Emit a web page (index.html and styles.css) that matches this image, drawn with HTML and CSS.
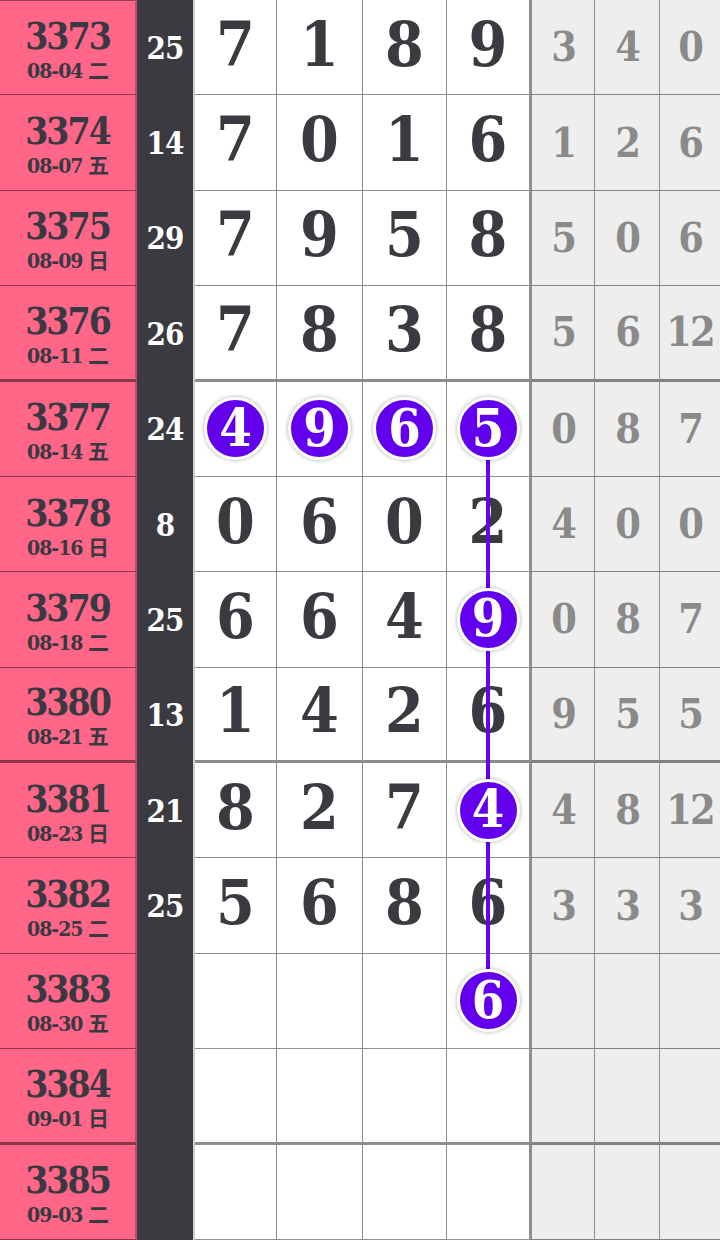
FILE: index.html
```html
<!DOCTYPE html>
<html lang="zh">
<head>
    <meta charset="UTF-8">
    <meta name="viewport" content="width=device-width, initial-scale=1.0">
    <title>走势图</title>
    <link rel="stylesheet" href="styles.css">
</head>
<body>
    <div class="chart" id="chart"></div>

    <script>
        // issue, date, sum, 4 digits, 3 spans; balls = digit positions drawn as circles
        let rows = [
            { issue: "3373", date: "08-04 二", sum: "25", digits: ["7", "1", "8", "9"], spans: ["3", "4", "0"] },
            { issue: "3374", date: "08-07 五", sum: "14", digits: ["7", "0", "1", "6"], spans: ["1", "2", "6"] },
            { issue: "3375", date: "08-09 日", sum: "29", digits: ["7", "9", "5", "8"], spans: ["5", "0", "6"] },
            { issue: "3376", date: "08-11 二", sum: "26", digits: ["7", "8", "3", "8"], spans: ["5", "6", "12"] },
            { issue: "3377", date: "08-14 五", sum: "24", digits: ["4", "9", "6", "5"], spans: ["0", "8", "7"], balls: [0, 1, 2, 3] },
            { issue: "3378", date: "08-16 日", sum: "8", digits: ["0", "6", "0", "2"], spans: ["4", "0", "0"] },
            { issue: "3379", date: "08-18 二", sum: "25", digits: ["6", "6", "4", "9"], spans: ["0", "8", "7"], balls: [3] },
            { issue: "3380", date: "08-21 五", sum: "13", digits: ["1", "4", "2", "6"], spans: ["9", "5", "5"] },
            { issue: "3381", date: "08-23 日", sum: "21", digits: ["8", "2", "7", "4"], spans: ["4", "8", "12"], balls: [3] },
            { issue: "3382", date: "08-25 二", sum: "25", digits: ["5", "6", "8", "6"], spans: ["3", "3", "3"] },
            { issue: "3383", date: "08-30 五", sum: "", digits: ["", "", "", "6"], spans: ["", "", ""], balls: [3] },
            { issue: "3384", date: "09-01 日", sum: "", digits: ["", "", "", ""], spans: ["", "", ""] },
            { issue: "3385", date: "09-03 二", sum: "", digits: ["", "", "", ""], spans: ["", "", ""] }
        ];

        const ROW_H = 1240 / 13;

        function buildChart() {
            let chart = document.getElementById("chart");

            rows.forEach((r, i) => {
                let row = document.createElement("div");
                row.className = "row" + (i % 4 === 3 ? " group-end" : "");

                let no = document.createElement("div");
                no.className = "cell no";
                no.innerHTML = `<span class="issue">${r.issue}</span><span class="date">${r.date}</span>`;
                row.appendChild(no);

                let sum = document.createElement("div");
                sum.className = "cell sum";
                sum.innerText = r.sum;
                row.appendChild(sum);

                r.digits.forEach((d, k) => {
                    let cell = document.createElement("div");
                    cell.className = "cell d d" + (k + 1);
                    if (r.balls && r.balls.includes(k)) {
                        cell.innerHTML = `<span class="ball">${d}</span>`;
                    } else {
                        cell.innerText = d;
                    }
                    row.appendChild(cell);
                });

                r.spans.forEach((s, k) => {
                    let cell = document.createElement("div");
                    cell.className = "cell g g" + (k + 1);
                    cell.innerText = s;
                    row.appendChild(cell);
                });

                chart.appendChild(row);
            });

            // line joining the balls of the last digit column
            let hits = rows.map((r, i) => (r.balls && r.balls.includes(3)) ? i : -1).filter(i => i >= 0);
            let line = document.createElement("div");
            line.className = "trend-line";
            line.style.top = (hits[0] + 0.5) * ROW_H + "px";
            line.style.height = (hits[hits.length - 1] - hits[0]) * ROW_H + "px";
            chart.appendChild(line);
        }

        buildChart();
    </script>
</body>
</html>
```

FILE: styles.css
```css
body {
    margin: 0;
    background: #ffffff;
    font-family: "DejaVu Serif", "Noto Sans CJK SC", serif;
    font-stretch: condensed;
    font-weight: bold;
    overflow: hidden;
}

.chart {
    position: relative;
    width: 720px;
}

.row {
    display: flex;
    height: 95.385px;
}

.row:first-child .no {
    box-shadow: inset 0 1px 0 rgba(0, 0, 0, 0.4);
}

.cell {
    box-sizing: border-box;
    display: flex;
    align-items: center;
    justify-content: center;
    border-bottom: 1px solid rgba(0, 0, 0, 0.45);
}

.row.group-end .cell {
    border-bottom-width: 3px;
}

.no {
    width: 137px;
    flex-direction: column;
    background: #ff6688;
    color: #3a3941;
    border-right: 2px solid rgba(0, 0, 0, 0.25);
    padding-top: 9px;
}

.no .issue {
    font-size: 37px;
    line-height: 38px;
    letter-spacing: -2px;
    margin-top: -4px;
}

.no .date {
    font-size: 21px;
    line-height: 24px;
    letter-spacing: -1px;
    margin-top: 4px;
}

.row .sum {
    width: 58px;
    background: #3a3a40;
    color: #ffffff;
    font-size: 31px;
    letter-spacing: -1px;
    border-bottom: none;
    border-right: 2px solid #d0d0d0;
}

.d {
    background: #ffffff;
    color: #3a3a40;
    font-size: 62px;
    border-right: 1px solid rgba(0, 0, 0, 0.45);
    padding-bottom: 6px;
}

.d1 { width: 82px; }
.d2 { width: 86px; }
.d3 { width: 84px; }
.d4 { width: 82px; border-right: none; }

.g {
    background: #eeeeee;
    color: #8a8a8a;
    font-size: 41px;
    letter-spacing: -2px;
    border-left: 1px solid rgba(0, 0, 0, 0.4);
}

.g1 { width: 65px; border-left: 3px solid rgba(0, 0, 0, 0.4); }
.g2 { width: 65px; }
.g3 { width: 61px; }

.ball {
    position: relative;
    z-index: 2;
    box-sizing: border-box;
    width: 63px;
    height: 63px;
    margin-top: 6px;
    border-radius: 50%;
    border: 3px solid #ffffff;
    background: #6200ee;
    box-shadow: 0 0 4px rgba(0, 0, 0, 0.35);
    color: #ffffff;
    font-size: 52px;
    display: flex;
    align-items: center;
    justify-content: center;
    padding-bottom: 3px;
}

.trend-line {
    position: absolute;
    z-index: 1;
    left: 486px;
    width: 4px;
    background: #6200ee;
}
```
